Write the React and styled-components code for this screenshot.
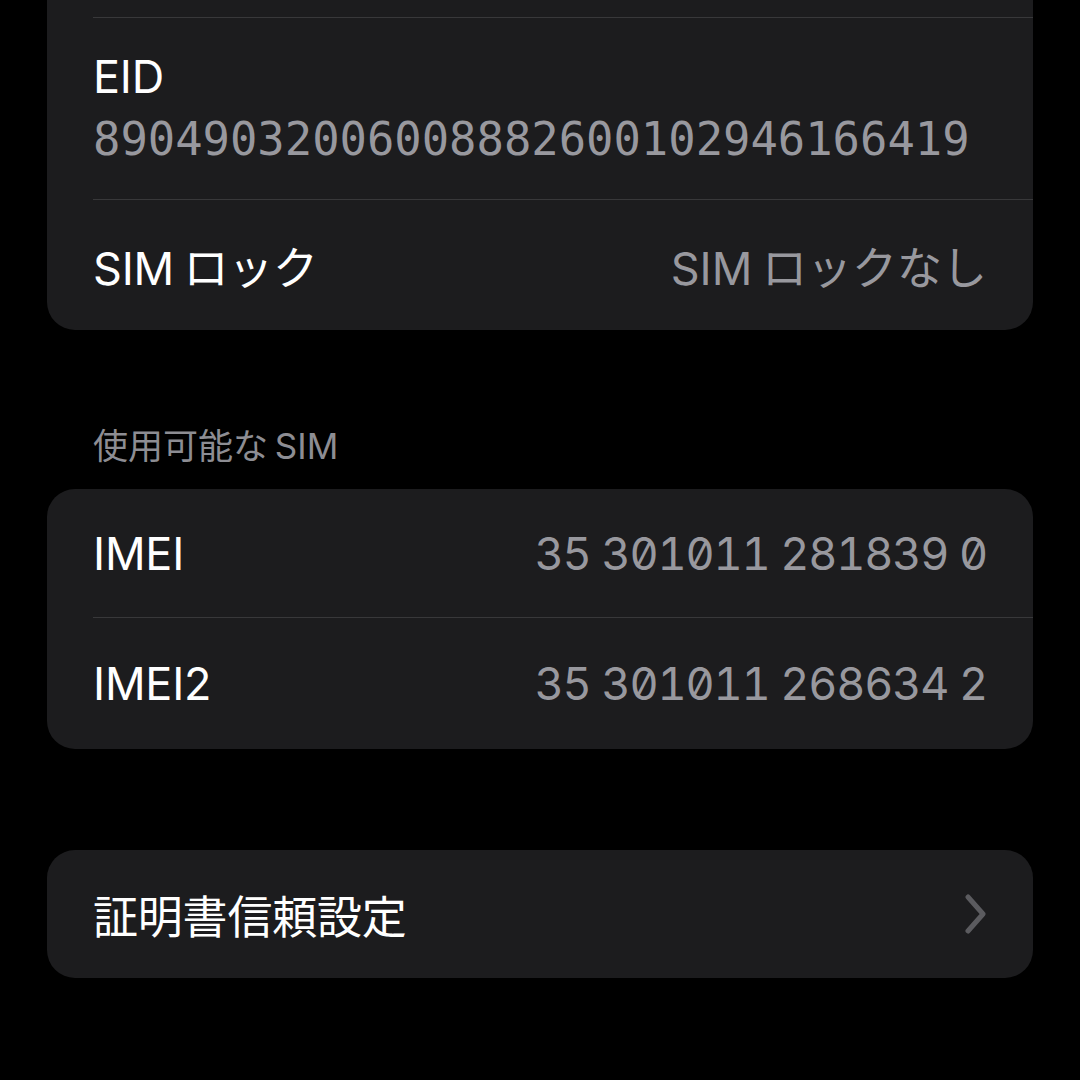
import React from "react";
import styled, { createGlobalStyle } from "styled-components";

const GlobalStyle = createGlobalStyle`
  html, body {
    margin: 0;
    padding: 0;
    background: #000;
    overflow: hidden;
  }
  body {
    font-family: Inter, "Noto Sans CJK JP", sans-serif;
    -webkit-font-smoothing: antialiased;
  }
`;

const Page = styled.div`
  width: 1080px;
  height: 1080px;
  background: #000;
  padding: 0 47px;
  box-sizing: border-box;
  display: flex;
  flex-direction: column;
`;

const Card = styled.div`
  background: #1c1c1e;
  border-radius: 28px;
  overflow: hidden;
  margin-top: ${(p) => p.$top || 0}px;
`;

const Row = styled.div`
  height: ${(p) => p.$h || 129}px;
  margin-left: 46px;
  padding-right: 46px;
  display: flex;
  align-items: center;
  justify-content: space-between;
  box-sizing: border-box;
  border-bottom: ${(p) => (p.$last ? "none" : "1.5px solid #38383a")};
`;

const Stack = styled.div`
  display: flex;
  flex-direction: column;
  justify-content: center;
  height: ${(p) => p.$h}px;
  margin-left: 46px;
  padding-right: 46px;
  box-sizing: border-box;
  border-bottom: 1.5px solid #38383a;
`;

const Label = styled.span`
  color: #ffffff;
  font-size: 45px;
  letter-spacing: -0.2px;
  word-spacing: -3px;
  font-family: Inter, "Noto Sans CJK JP", sans-serif;
`;

const Value = styled.span`
  color: #98989e;
  font-size: 45px;
  font-family: Inter, "Noto Sans CJK JP", sans-serif;
  letter-spacing: ${(p) => (p.$digits ? "-1.2px" : "0")};
  word-spacing: ${(p) => (p.$digits ? "0" : "-3px")};
  font-feature-settings: ${(p) => (p.$digits ? '"zero" 1, "tnum" 1' : "normal")};
`;

const MonoValue = styled.span`
  color: #98989e;
  font-size: 45.5px;
  line-height: 56px;
  margin-top: 8px;
  font-family: "DejaVu Sans Mono", monospace;
`;

const SectionHeader = styled.div`
  color: #8d8d93;
  font-size: 35px;
  padding: 0 46px;
  margin-top: 95px;
  margin-bottom: 22px;
  line-height: 42px;
  word-spacing: -3px;
  font-family: Inter, "Noto Sans CJK JP", sans-serif;
`;

const Chevron = () => (
  <svg width="22" height="40" viewBox="0 0 22 40" fill="none">
    <path
      d="M3 3 L18 20 L3 37"
      stroke="#5b5b5f"
      strokeWidth="5"
      strokeLinecap="round"
      strokeLinejoin="round"
    />
  </svg>
);

export default function App() {
  return (
    <>
      <GlobalStyle />
      <Page>
        <Card $top={-110}>
          <Row $h={128} />
          <Stack $h={182}>
            <Label>EID</Label>
            <MonoValue>89049032006008882600102946166419</MonoValue>
          </Stack>
          <Row $h={130} $last>
            <Label>SIM ロック</Label>
            <Value>SIM ロックなし</Value>
          </Row>
        </Card>

        <SectionHeader>使用可能な SIM</SectionHeader>

        <Card>
          <Row $h={129}>
            <Label>IMEI</Label>
            <Value $digits>35 301011 281839 0</Value>
          </Row>
          <Row $h={131} $last>
            <Label>IMEI2</Label>
            <Value $digits>35 301011 268634 2</Value>
          </Row>
        </Card>

        <Card $top={101}>
          <Row $h={128} $last>
            <Label>証明書信頼設定</Label>
            <Chevron />
          </Row>
        </Card>
      </Page>
    </>
  );
}
